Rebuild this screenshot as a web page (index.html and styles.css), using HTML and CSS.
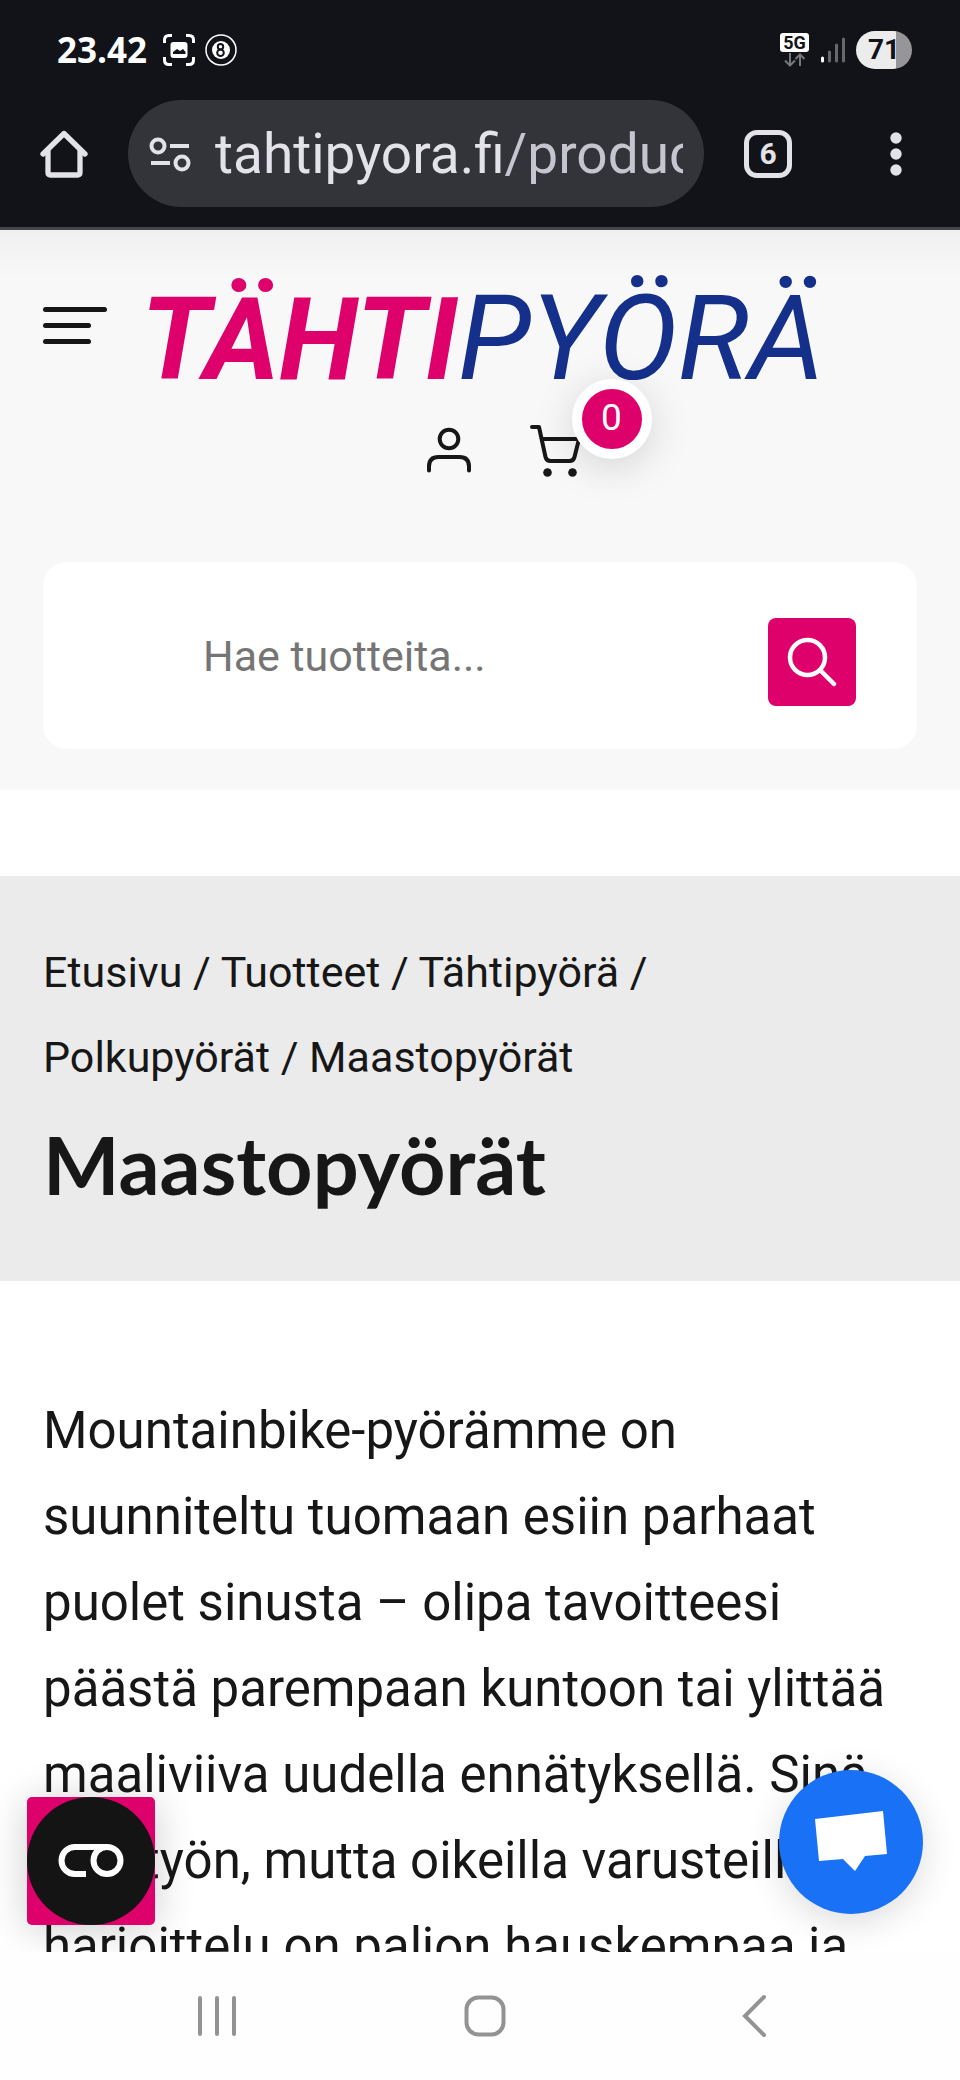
FILE: index.html
```html
<!DOCTYPE html>
<html lang="fi">
<head>
<meta charset="utf-8">
<meta name="viewport" content="width=device-width, initial-scale=1">
<title>Maastopyörät – Tähtipyörä</title>
<link rel="stylesheet" href="styles.css">
</head>
<body>
<div class="chrome">
  <div class="status">
    <span class="clock">23.42</span>
    <svg class="status-icon" width="32" height="32" viewBox="0 0 32 32" aria-hidden="true">
      <path d="M1.500 9V6q0-4.500 4.500-4.500h3M23 1.500h3q4.500 0 4.500 4.500v3M30.500 23v3q0 4.500-4.500 4.500h-3M9 30.500H6q-4.500 0-4.500-4.500v-3" fill="none" stroke="#fff" stroke-width="3"/>
      <rect x="7.500" y="8" width="17" height="16" rx="3" fill="#fff"/>
      <path d="M10 20v-2l4-3 3 2 3-2 2.500 3v2z" fill="#121318"/>
    </svg>
    <svg class="status-icon" width="32" height="32" viewBox="0 0 32 32" aria-hidden="true">
      <circle cx="16" cy="16" r="15" fill="none" stroke="#fff" stroke-width="1.500"/>
      <circle cx="16" cy="16" r="9" fill="#fff"/>
      <circle cx="15.500" cy="12.800" r="2.700" fill="none" stroke="#121318" stroke-width="2"/>
      <circle cx="15.500" cy="18.800" r="3.300" fill="none" stroke="#121318" stroke-width="2"/>
    </svg>
    <div class="network">
      <span class="five-g">5G</span>
      <svg width="22" height="14" viewBox="0 0 22 14" fill="none" stroke="#77787c" stroke-width="2" aria-hidden="true">
        <path d="M6 0v12M1 7.500l5 5 5-5M16 13V1M11.500 6L16 1.500 20.500 6"/>
      </svg>
    </div>
    <svg class="signal" width="26" height="28" viewBox="0 0 26 28" stroke-width="3" stroke-linecap="round" aria-hidden="true">
      <path d="M2.500 22v3" stroke="#fff"/>
      <path d="M9.500 16v9M16.500 9v16M23.500 3v22" stroke="#67686c"/>
    </svg>
    <span class="battery">71</span>
  </div>
  <div class="toolbar">
    <button class="bar-button" aria-label="Aloitussivu">
      <svg width="48" height="48" viewBox="0 0 48 48" fill="none" stroke="#e3e2e9" stroke-width="5.300" stroke-linejoin="round" stroke-linecap="round" aria-hidden="true">
        <path d="M3 24L24 3.500 45 24"/><path d="M8 21v21.500q0 2.500 2.500 2.500h27q2.500 0 2.500-2.500V21"/>
      </svg>
    </button>
    <button class="address" aria-label="Osoite">
      <svg class="tune" width="42" height="36" viewBox="0 0 42 36" fill="none" stroke="#e3e2e9" stroke-width="4" aria-hidden="true">
        <circle cx="9" cy="10" r="6.500"/><path d="M21 10h19M2 27h19"/><circle cx="33" cy="27" r="6.500"/>
      </svg>
      <span class="url">tahtipyora.fi<span class="url-path">/produc</span></span>
    </button>
    <button class="tabs" aria-label="Välilehdet">6</button>
    <button class="more" aria-label="Lisää">
      <svg width="12" height="44" viewBox="0 0 12 44" fill="#e3e2e9" aria-hidden="true">
        <circle cx="6" cy="6" r="5.700"/><circle cx="6" cy="22" r="5.700"/><circle cx="6" cy="38" r="5.700"/>
      </svg>
    </button>
  </div>
</div>

<div class="viewport">
  <header class="site-header">
    <div class="brand-row">
      <button class="menu" aria-label="Valikko"><span></span><span></span><span></span></button>
      <a class="logo" href="#"><b>TÄHTI</b><span>PYÖRÄ</span></a>
    </div>
    <div class="account-row">
      <a href="#" aria-label="Oma tili">
        <svg width="46" height="46" viewBox="0 0 46 46" fill="none" stroke="#171717" stroke-width="4" stroke-linecap="round" aria-hidden="true">
          <circle cx="23" cy="12" r="9.300"/><path d="M3 43.500v-4Q3 30 12.500 30h21Q43 30 43 39.500v4"/>
        </svg>
      </a>
      <a class="cart" href="#" aria-label="Ostoskori">
        <svg width="54" height="54" viewBox="0 0 54 54" aria-hidden="true">
          <path d="M3 4h7l6.500 30q1 4 5 4h19q4 0 5-4L50 16H13" fill="none" stroke="#171717" stroke-width="4" stroke-linecap="round" stroke-linejoin="round"/>
          <circle cx="18.500" cy="49.500" r="4.300" fill="#171717"/><circle cx="43.500" cy="49.500" r="4.300" fill="#171717"/>
        </svg>
        <span class="count">0</span>
      </a>
    </div>
    <form class="search">
      <input class="search-field" type="search" placeholder="Hae tuotteita..." aria-label="Hae tuotteita">
      <button class="search-button" type="button" aria-label="Hae">
        <svg width="50" height="50" viewBox="0 0 50 50" fill="none" stroke="#fff" stroke-width="4.500" stroke-linecap="round" aria-hidden="true">
          <circle cx="20.500" cy="20.500" r="17.500"/><path d="M33.500 33.500L47 47"/>
        </svg>
      </button>
    </form>
  </header>

  <section class="title-band">
    <nav class="crumbs" aria-label="Murupolku">
      <a href="#">Etusivu</a> / <a href="#">Tuotteet</a> / <a href="#">Tähtipyörä</a> / <a href="#">Polkupyörät</a> / Maastopyörät
    </nav>
    <h1 class="title">Maastopyörät</h1>
  </section>

  <main class="intro">
    <p>Mountainbike-pyörämme on suunniteltu tuomaan esiin parhaat puolet sinusta – olipa tavoitteesi päästä parempaan kuntoon tai ylittää maaliviiva uudella ennätyksellä. Sinä teet työn, mutta oikeilla varusteilla harjoittelu on paljon hauskempaa ja</p>
  </main>

  <button class="consent" aria-label="Evästeasetukset">
    <span class="consent-disc">
      <svg width="66" height="34" viewBox="0 0 66 34" fill="none" stroke="#fff" stroke-width="6" aria-hidden="true">
        <path d="M28 30H17A13.500 13.500 0 0 1 17 3H49"/><circle cx="49" cy="16.500" r="13.500"/>
      </svg>
    </span>
  </button>
  <button class="chat" aria-label="Chat">
    <svg width="72" height="62" viewBox="0 0 72 62" fill="#fff" aria-hidden="true"><path d="M0 8L68 0l4 43-22 2-10 15-12-12-24 2z"/></svg>
  </button>
</div>

<nav class="system-nav" aria-label="Järjestelmä">
  <button aria-label="Viimeisimmät">
    <svg width="40" height="42" viewBox="0 0 40 42" stroke="#939393" stroke-width="4" stroke-linecap="round" aria-hidden="true"><path d="M3 3v36M20 3v36M37 3v36"/></svg>
  </button>
  <button aria-label="Koti">
    <svg width="42" height="42" viewBox="0 0 42 42" fill="none" stroke="#939393" stroke-width="4" aria-hidden="true"><rect x="2.500" y="2.500" width="37" height="37" rx="12"/></svg>
  </button>
  <button aria-label="Takaisin">
    <svg width="24" height="44" viewBox="0 0 24 44" fill="none" stroke="#939393" stroke-width="4" stroke-linecap="round" aria-hidden="true"><path d="M22 3L3 22l19 19"/></svg>
  </button>
</nav>
</body>
</html>
```
FILE: styles.css
```css
* { box-sizing: border-box; }

body {
  margin: 0;
  height: 100vh;
  display: flex;
  flex-direction: column;
  background: #fff;
  color: #171717;
  font-family: Roboto, "Liberation Sans", sans-serif;
}

button {
  margin: 0;
  padding: 0;
  border: 0;
  background: none;
  color: inherit;
  font: inherit;
}

a { color: inherit; text-decoration: none; }
svg { display: block; flex: none; }

/* Browser chrome */
.chrome {
  flex: none;
  background: #121318;
  border-bottom: 3px solid #45464c;
}

.status {
  display: flex;
  align-items: center;
  height: 100px;
  padding: 0 48px 0 57px;
}

.clock {
  margin-right: 16px;
  color: #fff;
  font: 700 35px/36px "Open Sans", sans-serif;
}

.status-icon { margin-right: 10px; }

.network {
  display: flex;
  flex-direction: column;
  align-items: center;
  margin-left: auto;
  gap: 1px;
}

.five-g {
  width: 29px;
  border-radius: 3px;
  background: #fff;
  color: #121318;
  font-size: 18px;
  font-weight: 700;
  line-height: 19px;
  text-align: center;
}

.signal { margin: 0 10px 0 11px; }

.battery {
  width: 56px;
  border-radius: 20px;
  background: linear-gradient(90deg, #ececec 40px, #969698 40px);
  color: #121318;
  font-size: 28px;
  font-weight: 700;
  line-height: 38px;
  text-align: center;
}

.toolbar {
  display: flex;
  align-items: center;
  padding: 0 58px 20px 40px;
}

.address {
  flex: 1;
  display: flex;
  align-items: center;
  gap: 24px;
  min-width: 0;
  height: 107px;
  margin: 0 40px;
  padding: 0 21px;
  border-radius: 54px;
  background: #333439;
}

.url {
  flex: 1;
  min-width: 0;
  overflow: hidden;
  color: #e3e2e9;
  font-size: 55px;
  line-height: 72px;
  text-align: left;
  white-space: nowrap;
}

.url-path { color: #c5c4cf; }

.tabs {
  width: 48px;
  height: 48px;
  border: 5px solid #e3e2e9;
  border-radius: 13px;
  color: #e3e2e9;
  font-size: 30px;
  font-weight: 700;
  line-height: 38px;
}

.more { margin-left: 98px; }

/* Web page */
.viewport {
  position: relative;
  flex: 1;
  min-height: 0;
  overflow: hidden;
}

.site-header {
  padding: 53px 43px 41px;
  background: linear-gradient(#f0f0f0, #f8f8f8 48px);
}

.brand-row {
  display: flex;
  align-items: flex-start;
  gap: 34px;
}

.menu {
  display: flex;
  flex-direction: column;
  gap: 11px;
  width: 64px;
  margin-top: 24px;
}

.menu span {
  width: 48px;
  height: 5px;
  border-radius: 3px;
  background: #171717;
}

.menu span:first-child { width: 64px; }

.logo {
  display: flex;
  align-items: baseline;
  height: 115px;
  color: #14308b;
  font-size: 119px;
  font-style: italic;
  font-weight: 400;
  line-height: 112px;
}

.logo b { color: #de006b; font-size: 115px; font-weight: 700; }

.account-row {
  display: flex;
  justify-content: center;
  align-items: center;
  gap: 57px;
  margin-top: 25px;
  padding-left: 48px;
}

.cart { position: relative; }

.count {
  position: absolute;
  left: 43px;
  top: -44px;
  width: 80px;
  height: 80px;
  border: 10px solid #fff;
  border-radius: 50%;
  background: #de006b;
  box-shadow: 0 8px 40px rgba(0, 0, 0, .15);
  color: #fff;
  font-size: 37px;
  line-height: 58px;
  text-align: center;
}

.search {
  display: flex;
  align-items: center;
  height: 187px;
  margin-top: 85px;
  padding: 0 61px 0 160px;
  border-radius: 24px;
  background: #fff;
}

.search-field {
  flex: 1;
  min-width: 0;
  padding: 0;
  border: 0;
  outline: 0;
  background: none;
  color: #171717;
  font: 400 43px/60px Roboto, sans-serif;
}

.search-field::placeholder { color: #757575; }

.search-button {
  display: grid;
  place-items: center;
  width: 88px;
  height: 88px;
  margin-top: 12px;
  border-radius: 8px;
  background: #de006b;
}

.title-band {
  margin-top: 86px;
  padding: 54px 43px 58px;
  background: #ebebeb;
}

.crumbs {
  max-width: 700px;
  font-size: 43px;
  line-height: 85px;
}

.title {
  margin: 7px 0 3px;
  font: 700 81px/113px Lato, sans-serif;
}

.intro {
  padding: 107px 43px 0;
  font-size: 51px;
  line-height: 86px;
}

.intro p { margin: 0; }

.consent,
.chat {
  position: absolute;
  display: grid;
  place-items: center;
}

.consent {
  left: 27px;
  bottom: 27px;
  width: 128px;
  height: 128px;
  border-radius: 5px;
  background: #de006b;
  box-shadow: 0 4px 40px rgba(0, 0, 0, .2);
}

.consent-disc {
  display: grid;
  place-items: center;
  width: 128px;
  height: 128px;
  border-radius: 50%;
  background: #141414;
}

.chat {
  right: 37px;
  bottom: 38px;
  width: 144px;
  height: 144px;
  border-radius: 50%;
  background: #1972f5;
  box-shadow: 0 8px 36px rgba(0, 0, 0, .14);
}

/* System navigation */
.system-nav {
  flex: none;
  display: grid;
  grid-template-columns: repeat(3, 1fr);
  height: 128px;
  padding: 0 72px 0 83px;
  background: #fefefe;
}

.system-nav button { display: grid; place-items: center; }
```
